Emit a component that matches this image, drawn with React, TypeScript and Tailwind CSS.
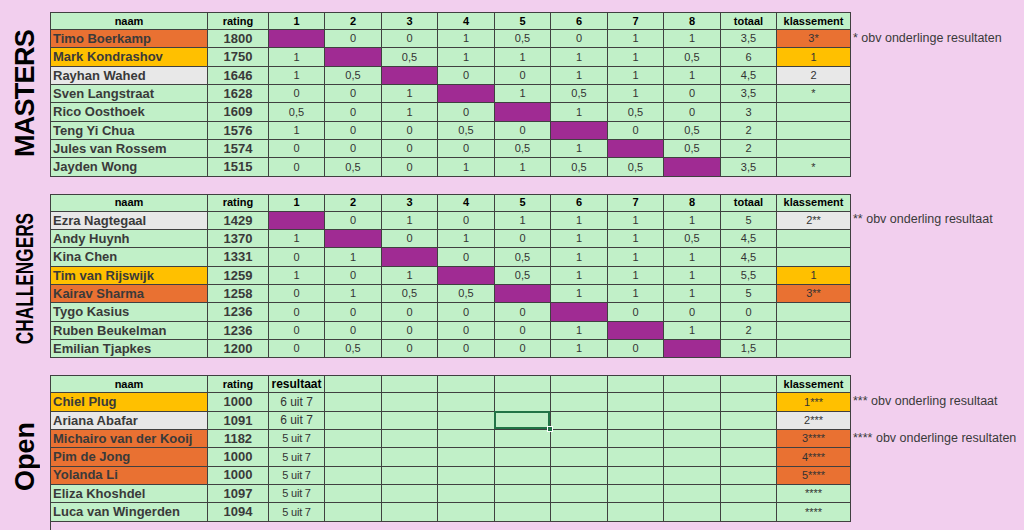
import React from "react";

type Fill = "g" | "o" | "y" | "w";
const fillCls: Record<Fill, string> = {
  g: "bg-[#c1f0c8]",
  o: "bg-[#e97132]",
  y: "bg-[#ffc000]",
  w: "bg-[#e8e8e8]",
};

const COLS =
  "grid grid-cols-[157px_61px_56px_57px_56px_57px_56px_57px_56px_57px_56px_74px]";
const CELL = "border-r border-b border-[#404040] flex items-center justify-center overflow-hidden whitespace-nowrap";
const ROW_H = "h-[18.33px]";
const HEAD_H = "h-[17px]";

type RR = {
  name: string;
  rating: string;
  fill: Fill;
  scores: string[];
  total: string;
  rank: string;
  rankFill: Fill;
};

const masters: RR[] = [
  { name: "Timo Boerkamp", rating: "1800", fill: "o", scores: ["X", "0", "0", "1", "0,5", "0", "1", "1"], total: "3,5", rank: "3*", rankFill: "o" },
  { name: "Mark Kondrashov", rating: "1750", fill: "y", scores: ["1", "X", "0,5", "1", "1", "1", "1", "0,5"], total: "6", rank: "1", rankFill: "y" },
  { name: "Rayhan Wahed", rating: "1646", fill: "w", scores: ["1", "0,5", "X", "0", "0", "1", "1", "1"], total: "4,5", rank: "2", rankFill: "w" },
  { name: "Sven Langstraat", rating: "1628", fill: "g", scores: ["0", "0", "1", "X", "1", "0,5", "1", "0"], total: "3,5", rank: "*", rankFill: "g" },
  { name: "Rico Oosthoek", rating: "1609", fill: "g", scores: ["0,5", "0", "1", "0", "X", "1", "0,5", "0"], total: "3", rank: "", rankFill: "g" },
  { name: "Teng Yi Chua", rating: "1576", fill: "g", scores: ["1", "0", "0", "0,5", "0", "X", "0", "0,5"], total: "2", rank: "", rankFill: "g" },
  { name: "Jules van Rossem", rating: "1574", fill: "g", scores: ["0", "0", "0", "0", "0,5", "1", "X", "0,5"], total: "2", rank: "", rankFill: "g" },
  { name: "Jayden Wong", rating: "1515", fill: "g", scores: ["0", "0,5", "0", "1", "1", "0,5", "0,5", "X"], total: "3,5", rank: "*", rankFill: "g" },
];

const challengers: RR[] = [
  { name: "Ezra Nagtegaal", rating: "1429", fill: "w", scores: ["X", "0", "1", "0", "1", "1", "1", "1"], total: "5", rank: "2**", rankFill: "w" },
  { name: "Andy Huynh", rating: "1370", fill: "g", scores: ["1", "X", "0", "1", "0", "1", "1", "0,5"], total: "4,5", rank: "", rankFill: "g" },
  { name: "Kina Chen", rating: "1331", fill: "g", scores: ["0", "1", "X", "0", "0,5", "1", "1", "1"], total: "4,5", rank: "", rankFill: "g" },
  { name: "Tim van Rijswijk", rating: "1259", fill: "y", scores: ["1", "0", "1", "X", "0,5", "1", "1", "1"], total: "5,5", rank: "1", rankFill: "y" },
  { name: "Kairav Sharma", rating: "1258", fill: "o", scores: ["0", "1", "0,5", "0,5", "X", "1", "1", "1"], total: "5", rank: "3**", rankFill: "o" },
  { name: "Tygo Kasius", rating: "1236", fill: "g", scores: ["0", "0", "0", "0", "0", "X", "0", "0"], total: "0", rank: "", rankFill: "g" },
  { name: "Ruben Beukelman", rating: "1236", fill: "g", scores: ["0", "0", "0", "0", "0", "1", "X", "1"], total: "2", rank: "", rankFill: "g" },
  { name: "Emilian Tjapkes", rating: "1200", fill: "g", scores: ["0", "0,5", "0", "0", "0", "1", "0", "X"], total: "1,5", rank: "", rankFill: "g" },
];

type OpenRow = { name: string; rating: string; fill: Fill; res: string; rank: string };
const openRows: OpenRow[] = [
  { name: "Chiel Plug", rating: "1000", fill: "y", res: "6 uit 7", rank: "1***" },
  { name: "Ariana Abafar", rating: "1091", fill: "w", res: "6 uit 7", rank: "2***" },
  { name: "Michairo van der Kooij", rating: "1182", fill: "o", res: "5 uit 7", rank: "3****" },
  { name: "Pim de Jong", rating: "1000", fill: "o", res: "5 uit 7", rank: "4****" },
  { name: "Yolanda Li", rating: "1000", fill: "o", res: "5 uit 7", rank: "5****" },
  { name: "Eliza Khoshdel", rating: "1097", fill: "g", res: "5 uit 7", rank: "****" },
  { name: "Luca van Wingerden", rating: "1094", fill: "g", res: "5 uit 7", rank: "****" },
];

function Label({ text, extra, h }: { text: string; extra?: string; h: string }) {
  return (
    <div className={`w-[50px] shrink-0 flex items-center justify-center ${h}`}>
      <span
        className={`[writing-mode:vertical-rl] rotate-180 font-bold text-black leading-none whitespace-nowrap ${extra ?? ""}`}
      >
        {text}
      </span>
    </div>
  );
}

function Head({ children, extra }: { children?: React.ReactNode; extra?: string }) {
  return (
    <div className={`${CELL} ${HEAD_H} text-[11px] font-bold text-black ${extra ?? ""}`}>{children}</div>
  );
}

function NameCell({ name, fill }: { name: string; fill: Fill }) {
  return (
    <div className={`${CELL} ${ROW_H} ${fillCls[fill]} !justify-start pl-[2px] text-[13px] font-bold text-[#3a3a3a]`}>
      {name}
    </div>
  );
}

function RatingCell({ rating }: { rating: string }) {
  return <div className={`${CELL} ${ROW_H} text-[13px] font-bold text-[#3a3a3a]`}>{rating}</div>;
}

function Notes({ notes, rows }: { notes: Record<number, string>; rows: number }) {
  return (
    <div className="flex flex-col pl-[2px] text-[12.5px] text-[#3a3a3a]">
      <div className={HEAD_H} />
      {Array.from({ length: rows }).map((_, i) => (
        <div key={i} className={`${ROW_H} flex items-center whitespace-nowrap`}>
          {notes[i] ?? ""}
        </div>
      ))}
    </div>
  );
}

function RRTable({ rows, notes }: { rows: RR[]; notes: Record<number, string> }) {
  return (
    <div className="flex items-start">
      <div className={`${COLS} border-l border-t border-[#404040] bg-[#c1f0c8]`}>
        <Head>naam</Head>
        <Head>rating</Head>
        {["1", "2", "3", "4", "5", "6", "7", "8"].map((h) => (
          <Head key={h}>{h}</Head>
        ))}
        <Head>totaal</Head>
        <Head>klassement</Head>
        {rows.map((r) => (
          <React.Fragment key={r.name}>
            <NameCell name={r.name} fill={r.fill} />
            <RatingCell rating={r.rating} />
            {r.scores.map((s, i) =>
              s === "X" ? (
                <div key={i} className={`${CELL} ${ROW_H} bg-[#a02b93]`} />
              ) : (
                <div key={i} className={`${CELL} ${ROW_H} text-[11px] text-[#333]`}>
                  {s}
                </div>
              )
            )}
            <div className={`${CELL} ${ROW_H} text-[11px] text-[#333]`}>{r.total}</div>
            <div className={`${CELL} ${ROW_H} ${fillCls[r.rankFill]} text-[11px] text-[#333]`}>{r.rank}</div>
          </React.Fragment>
        ))}
      </div>
      <Notes notes={notes} rows={rows.length} />
    </div>
  );
}

function OpenTable() {
  return (
    <div className="flex items-start">
      <div className="flex flex-col">
        <div className={`${COLS} border-l border-t border-[#404040] bg-[#c1f0c8]`}>
          <Head>naam</Head>
          <Head>rating</Head>
          <Head extra="!text-[12px]">resultaat</Head>
          {Array.from({ length: 8 }).map((_, i) => (
            <Head key={i} />
          ))}
          <Head>klassement</Head>
          {openRows.map((r, ri) => (
            <React.Fragment key={r.name}>
              <NameCell name={r.name} fill={r.fill} />
              <RatingCell rating={r.rating} />
              <div
                className={`${CELL} ${ROW_H} text-[#333] ${
                  r.res.startsWith("6") ? "text-[12px]" : "text-[11px] tracking-[-0.2px]"
                }`}
              >
                {r.res}
              </div>
              {Array.from({ length: 8 }).map((_, i) => (
                <div key={i} className={`${CELL} ${ROW_H} ${ri === 1 && i === 3 ? "relative !overflow-visible" : ""}`}>
                  {ri === 1 && i === 3 && (
                    <>
                      <div className="absolute -left-[1px] -top-[1px] right-0 bottom-0 border-2 border-[#217346]" />
                      <div className="absolute -right-[3px] -bottom-[3px] w-[6px] h-[6px] bg-[#217346] border border-white" />
                    </>
                  )}
                </div>
              ))}
              <div className={`${CELL} ${ROW_H} ${fillCls[r.fill]} text-[11px] text-[#333]`}>
                {r.rank}
              </div>
            </React.Fragment>
          ))}
        </div>
        <div className="h-[18px] border-l border-[#404040]" />
      </div>
      <div className="flex flex-col pl-[2px] text-[12.5px] text-[#3a3a3a]">
        <div className={HEAD_H} />
        <div className={`${ROW_H} flex items-center whitespace-nowrap`}>*** obv onderling resultaat</div>
        <div className={ROW_H} />
        <div className={`${ROW_H} flex items-center whitespace-nowrap`}>**** obv onderlinge resultaten</div>
      </div>
    </div>
  );
}

export default function App() {
  return (
    <div className="h-[530px] w-full overflow-hidden bg-[#f2cfee] font-['Liberation_Sans',Arial,sans-serif] pt-[12px]">
      <div className="flex flex-col gap-y-[17px]">
        <div className="flex items-start">
          <Label text="MASTERS" h="h-[164px]" extra="text-[27px] tracking-[-0.7px]" />
          <RRTable rows={masters} notes={{ 0: "* obv onderlinge resultaten" }} />
        </div>
        <div className="flex items-start">
          <Label text="CHALLENGERS" h="h-[164px]" extra="text-[23px] scale-y-75 translate-y-[3px]" />
          <RRTable rows={challengers} notes={{ 0: "** obv onderling resultaat" }} />
        </div>
        <div className="flex items-start">
          <Label text="Open" h="h-[163px]" extra="text-[27px]" />
          <OpenTable />
        </div>
      </div>
    </div>
  );
}
